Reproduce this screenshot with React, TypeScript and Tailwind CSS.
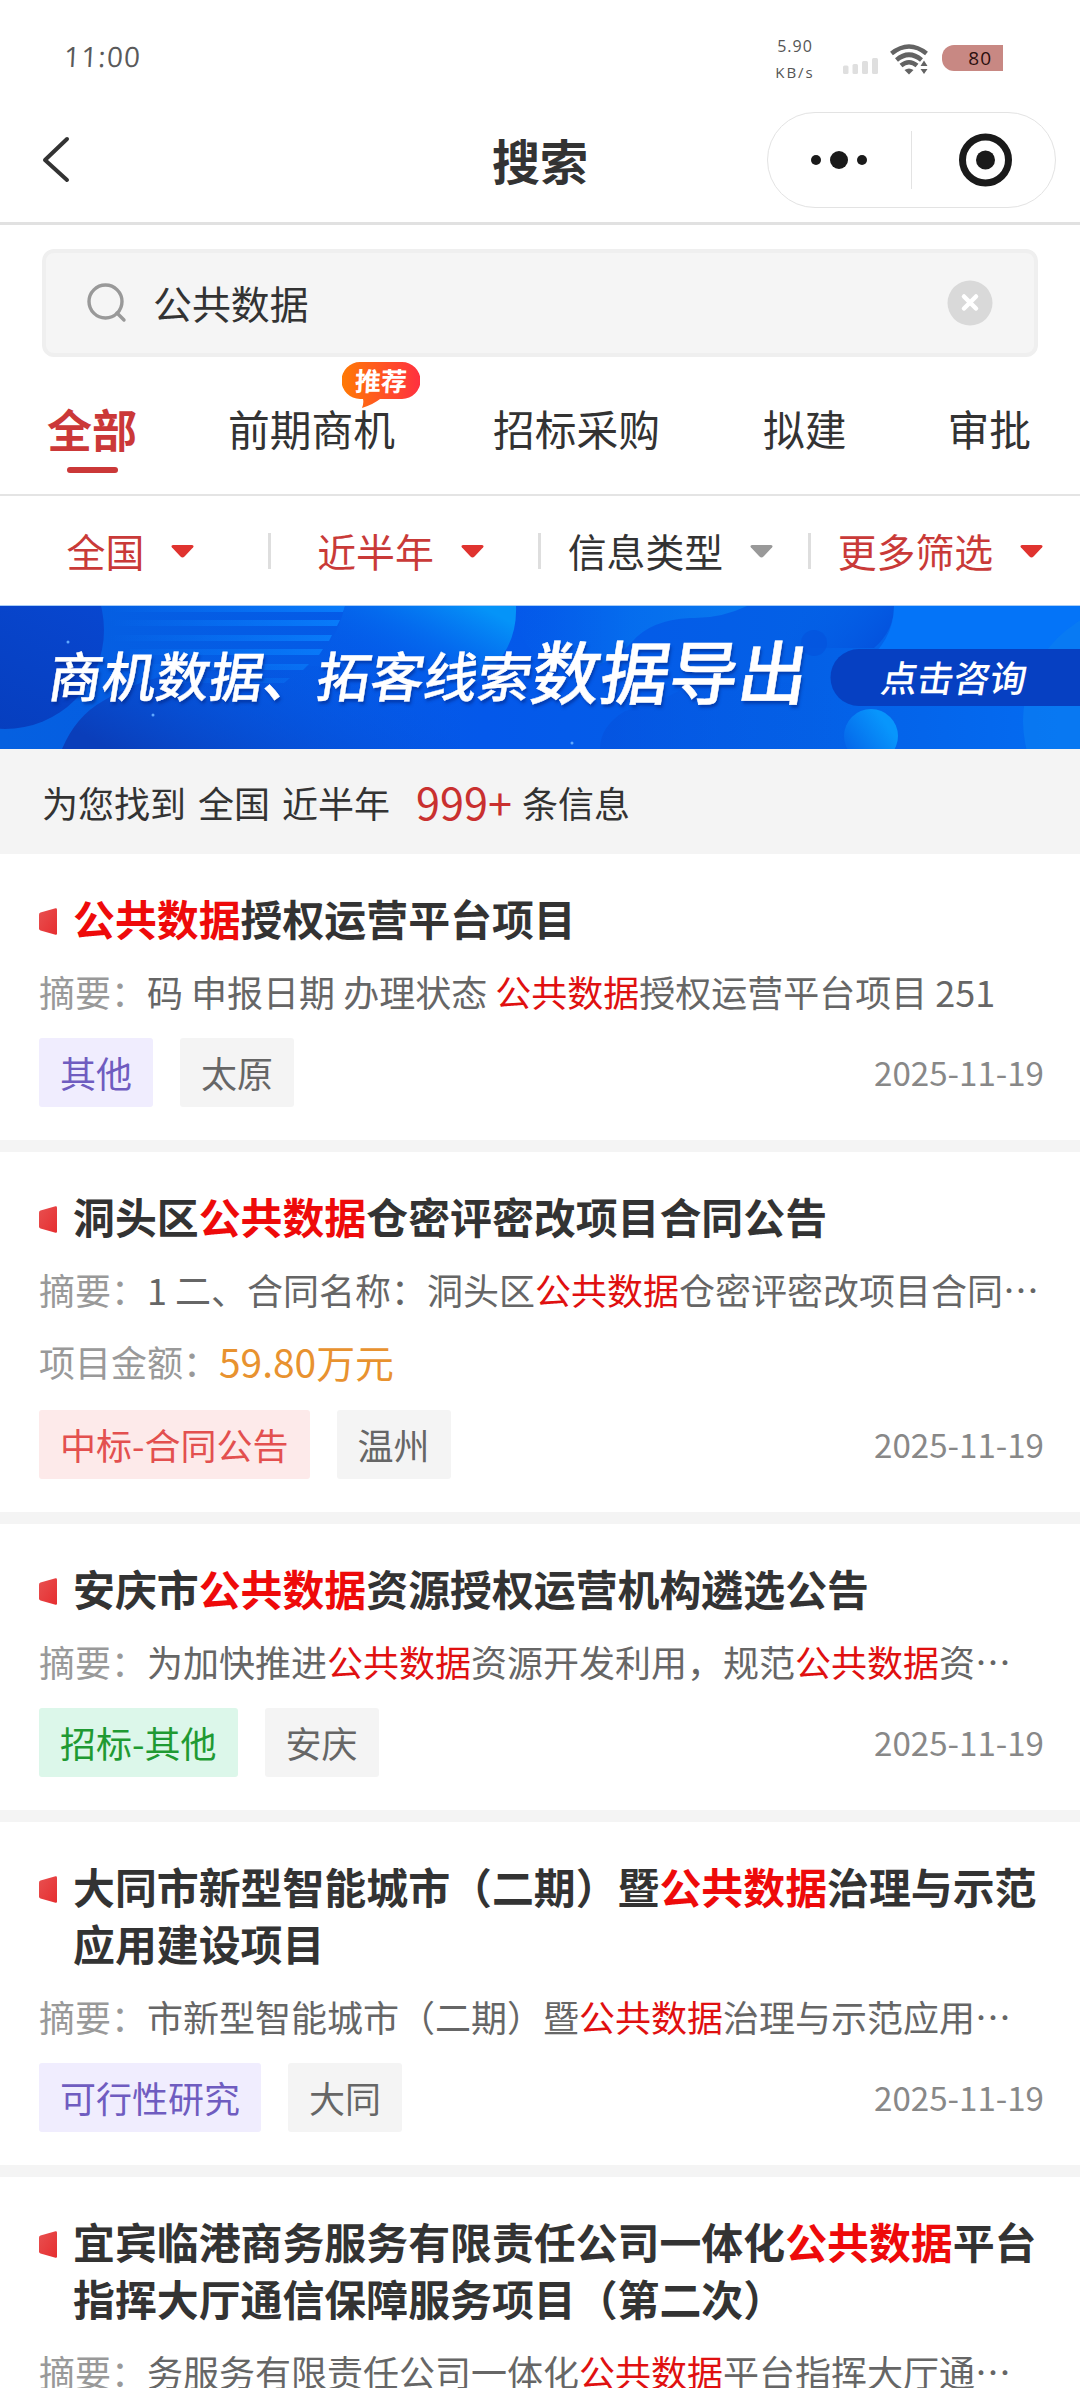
import React from "react";

type Part = string | { hl: string };

interface Item {
  title: Part[];
  summary: Part[];
  amount?: string;
  tag: string;
  tagClass: string;
  city: string;
}

const KEY = { hl: "公共数据" };
const PURPLE = "bg-[#f0edfe] text-[#6f5cc0]";
const RED = "bg-[#fdeaea] text-[#e3504f]";
const GREEN = "bg-[#dcf7ea] text-[#1f9a32]";

const ITEMS: Item[] = [
  {
    title: [KEY, "授权运营平台项目"],
    summary: ["码 申报日期 办理状态 ", KEY, "授权运营平台项目 251"],
    tag: "其他",
    tagClass: PURPLE,
    city: "太原",
  },
  {
    title: ["洞头区", KEY, "仓密评密改项目合同公告"],
    summary: ["1 二、合同名称：洞头区", KEY, "仓密评密改项目合同…"],
    amount: "59.80万元",
    tag: "中标-合同公告",
    tagClass: RED,
    city: "温州",
  },
  {
    title: ["安庆市", KEY, "资源授权运营机构遴选公告"],
    summary: ["为加快推进", KEY, "资源开发利用，规范", KEY, "资…"],
    tag: "招标-其他",
    tagClass: GREEN,
    city: "安庆",
  },
  {
    title: ["大同市新型智能城市（二期）暨", KEY, "治理与示范应用建设项目"],
    summary: ["市新型智能城市（二期）暨", KEY, "治理与示范应用…"],
    tag: "可行性研究",
    tagClass: PURPLE,
    city: "大同",
  },
  {
    title: ["宜宾临港商务服务有限责任公司一体化", KEY, "平台指挥大厅通信保障服务项目（第二次）"],
    summary: ["务服务有限责任公司一体化", KEY, "平台指挥大厅通…"],
    tag: "招标-其他",
    tagClass: GREEN,
    city: "宜宾",
  },
];

function Parts({ parts, color }: { parts: Part[]; color: string }) {
  return (
    <>
      {parts.map((p, i) =>
        typeof p === "string" ? (
          <span key={i}>{p}</span>
        ) : (
          <span key={i} className={color}>
            {p.hl}
          </span>
        )
      )}
    </>
  );
}

function StatusBar() {
  return (
    <div className="flex h-[112px] items-start justify-between pl-[64px] pr-[77px]">
      <div className="mt-[40px] -skew-x-3 font-['Open_Sans'] text-[28px] leading-8 font-medium tracking-[1.2px] text-[#5a5a5a]">
        11:00
      </div>
      <div className="flex">
        <div className="mt-[36px] flex w-[40px] flex-col items-center font-['Open_Sans'] text-[16px] leading-5 text-[#555]">
          <span className="tracking-[1px]">5.90</span>
          <span className="mt-[6px] text-[15px] tracking-[2px]">KB/s</span>
        </div>
        <svg className="mt-[58px] ml-[28px]" width="36" height="16" viewBox="0 0 36 16" fill="#dfdfdf">
          <rect x="0" y="7.5" width="5.5" height="8.5" rx="1.5" />
          <rect x="9.5" y="6" width="5.5" height="10" rx="1.5" />
          <rect x="19" y="3" width="6" height="13" rx="1.5" />
          <rect x="29" y="0" width="6" height="16" rx="1.5" />
        </svg>
        <svg className="mt-[44px] ml-[11px]" width="40" height="31" viewBox="0 0 40 31">
          <g fill="none" stroke="#636363" strokeWidth="4.6">
            <path d="M1.5 9.500 Q19 -4.500 36.500 9.500" />
            <path d="M6.5 16 Q19 5.500 31.500 16" />
            <path d="M11 21.500 Q19 15 27 21.500" />
          </g>
          <path d="M14.500 26 Q19 23 23.500 26 L19 30.500 Z" fill="#636363" />
          <path d="M34 16.500 L37.500 22 H30.500 Z M34 30 L37.500 25 H30.500 Z" fill="#636363" />
        </svg>
        <div className="mt-[45px] ml-[12px] flex h-[26px] w-[61px] items-center justify-end rounded-l-[12px] bg-[#c88883] pr-[11px] font-['Open_Sans'] text-[19px] tracking-[1px] text-[#2b0f0e]">
          80
        </div>
      </div>
    </div>
  );
}

function NavBar() {
  return (
    <div className="flex h-[113px] items-start justify-between border-b-[3px] border-[#e1e1e1] pl-[42px] pr-[24px]">
      <div className="flex h-24 w-[271px] items-center">
        <svg width="28" height="48" viewBox="0 0 28 48" fill="none" stroke="#333" strokeWidth="4" strokeLinecap="round" strokeLinejoin="round">
          <path d="M25 3 L3 24 L25 44" />
        </svg>
      </div>
      <h1 className="text-[48px] leading-[94px] font-bold text-[#333]">搜索</h1>
      <div className="flex h-24 w-[289px] items-center rounded-full border border-[#e3e3e3]">
        <svg width="143" height="58" viewBox="0 0 143 58" fill="#1a1a1a">
          <circle cx="48" cy="29" r="5" />
          <circle cx="71" cy="29" r="9" />
          <circle cx="94" cy="29" r="5" />
        </svg>
        <div className="h-[58px] w-px bg-[#e3e3e3]" />
        <svg width="143" height="58" viewBox="0 0 143 58">
          <circle cx="73.500" cy="29" r="23" fill="none" stroke="#1a1a1a" strokeWidth="7" />
          <circle cx="73.500" cy="29" r="9.500" fill="#1a1a1a" />
        </svg>
      </div>
    </div>
  );
}

function SearchBox() {
  return (
    <div className="mx-[42px] mt-[24px] flex h-[108px] items-center rounded-[12px] border-4 border-[#efefef] bg-[#f5f5f5] pl-[40px] pr-[41px] text-[#333]">
      <svg width="42" height="42" viewBox="0 0 42 42" fill="none" stroke="#999" strokeWidth="3.400" strokeLinecap="round">
        <circle cx="19.500" cy="19.500" r="16.500" />
        <path d="M31 31 L38 38" />
      </svg>
      <span className="mb-[2px] ml-[25px] text-[38.88px] leading-none">公共数据</span>
      <svg className="ml-auto" width="46" height="46" viewBox="0 0 46 46">
        <circle cx="23" cy="23" r="22.500" fill="#d9d9d9" />
        <path d="M17 16.500 L29 28.500 M29 16.500 L17 28.500" stroke="#fff" strokeWidth="4.500" strokeLinecap="round" />
      </svg>
    </div>
  );
}

function Tabs() {
  return (
    <div className="flex h-[139px] items-start border-b-2 border-[#e4e4e4] pl-[46px] text-[41.760px] leading-[60px] whitespace-nowrap text-[#333]">
      <div className="mt-[42px] flex w-[92px] flex-col items-center">
        <span className="text-[45px] font-bold text-[#cb3838]">全部</span>
        <span className="mt-[8px] h-[6px] w-[51px] rounded-full bg-[#cb3838]" />
      </div>
      <div className="relative mt-[41px] ml-[90px]">
        前期商机
        <div className="absolute top-[-36px] left-[114px] h-[46px] w-[78px]">
          <svg className="absolute inset-0" width="78" height="46" viewBox="0 0 78 46">
            <defs>
              <linearGradient id="badge" x1="0" x2="1">
                <stop offset="0" stopColor="#ff7a05" />
                <stop offset="1" stopColor="#ff3040" />
              </linearGradient>
            </defs>
            <path d="M18 0 H60 A18 18 0 0 1 60 37 H38 Q32 42 20 46 Q22 41 21 37 H18 A18 18 0 0 1 18 0 Z" fill="url(#badge)" />
          </svg>
          <span className="absolute top-0 left-[13px] -skew-x-3 text-[26px] leading-[36px] font-bold text-white">推荐</span>
        </div>
      </div>
      <span className="mt-[41px] ml-[98px]">招标采购</span>
      <span className="mt-[41px] ml-[103px]">拟建</span>
      <span className="mt-[41px] ml-[101px]">审批</span>
    </div>
  );
}

const FILTERS = [
  { label: "全国", active: true },
  { label: "近半年", active: true },
  { label: "信息类型", active: false },
  { label: "更多筛选", active: true },
];

function Filters() {
  return (
    <div className="grid h-[109px] grid-cols-4 text-[38.88px]">
      {FILTERS.map((f, i) => (
        <div key={f.label} className="relative flex items-center justify-center pr-[9px] whitespace-nowrap">
          <span className={f.active ? "text-[#c93a38]" : "text-[#333]"}>{f.label}</span>
          <svg className="mt-[2px] ml-[27px]" width="23" height="13" viewBox="0 0 23 13">
            <path
              d="M2 0 H21 Q23.500 0.500 22 2.500 L13.500 11.500 Q11.500 13.500 9.500 11.500 L1 2.500 Q-0.500 0.500 2 0 Z"
              fill={f.active ? "#e0332f" : "#999"}
            />
          </svg>
          {i < 3 && <span className="absolute top-[37px] right-[-1px] h-[36px] w-[3px] bg-[#dedede]" />}
        </div>
      ))}
    </div>
  );
}

function BannerArt() {
  return (
    <svg className="absolute inset-0" width="1080" height="143" viewBox="0 0 1080 143">
      <defs>
        <linearGradient id="base" x1="0" x2="1">
          <stop offset="0" stopColor="#0560e0" />
          <stop offset="0.45" stopColor="#0458ea" />
          <stop offset="0.75" stopColor="#0460e6" />
          <stop offset="1" stopColor="#046cf2" />
        </linearGradient>
        <linearGradient id="deep" x1="0" x2="1" y1="0.7" y2="0.3">
          <stop offset="0" stopColor="#0a3eba" />
          <stop offset="1" stopColor="#0458ea" stopOpacity="0" />
        </linearGradient>
        <linearGradient id="orb" x1="0" y1="1" x2="0.5" y2="0">
          <stop offset="0" stopColor="#063cba" />
          <stop offset="1" stopColor="#0848d2" />
        </linearGradient>
        <linearGradient id="stripe" gradientUnits="userSpaceOnUse" x1="110" x2="345" y1="0" y2="0">
          <stop offset="0" stopColor="#0a84ff" stopOpacity="0" />
          <stop offset="1" stopColor="#0a84ff" stopOpacity="0.8" />
        </linearGradient>
        <linearGradient id="glow" x1="1" y1="0.2" x2="0.3" y2="0.8">
          <stop offset="0" stopColor="#0594f8" />
          <stop offset="0.45" stopColor="#0470f0" stopOpacity="0.75" />
          <stop offset="1" stopColor="#0458ea" stopOpacity="0" />
        </linearGradient>
        <linearGradient id="wave" x1="0" x2="1">
          <stop offset="0" stopColor="#0568ee" stopOpacity="0" />
          <stop offset="0.5" stopColor="#0674f0" />
          <stop offset="1" stopColor="#0a84f2" />
        </linearGradient>
        <linearGradient id="dark" x1="1" y1="0.8" x2="0.2" y2="0.6">
          <stop offset="0" stopColor="#0450dc" />
          <stop offset="1" stopColor="#0460e6" stopOpacity="0" />
        </linearGradient>
        <linearGradient id="bubble" x1="0.8" y1="0.3" x2="0.1" y2="0.8">
          <stop offset="0" stopColor="#0896fc" />
          <stop offset="1" stopColor="#0568ea" />
        </linearGradient>
        <linearGradient id="soft" x1="0" x2="1">
          <stop offset="0" stopColor="#0550dc" />
          <stop offset="1" stopColor="#0460e6" stopOpacity="0" />
        </linearGradient>
      </defs>
      <rect width="1080" height="143" fill="url(#base)" />
      <circle cx="5" cy="24" r="99" fill="url(#orb)" />
      <path d="M62 143 Q76 110 103 95 Q150 65 230 60 L460 60 V143 Z" fill="url(#deep)" />
      <g fill="url(#stripe)">
        <path d="M110 0 H345 L343 6 H110 Z" />
        <path d="M110 14 H340 L337 20 H110 Z" />
        <path d="M110 29 H332 L329 35 H110 Z" />
        <path d="M130 43 H323 L319 49 H130 Z" />
        <path d="M150 58 H309 L303 64 H150 Z" opacity="0.8" />
        <path d="M170 72 H290 L284 77 H170 Z" opacity="0.5" />
      </g>
      <path d="M345 0 H516 Q518 50 470 80 Q430 100 370 90 Q320 80 309 60 Q335 40 345 0 Z" fill="url(#glow)" />
      <path d="M516 0 H747 Q720 13 690 12 Q650 14 632 36 Q600 70 560 60 Q517 50 516 0 Z" fill="url(#wave)" opacity="0.7" />
      <path d="M747 0 H894 Q894 25 874 42 H800 Q770 20 747 0 Z" fill="url(#dark)" />
      <circle cx="814" cy="37" r="13" fill="#0552dc" opacity="0.6" />
      <path d="M894 0 H1080 V60 H860 Q894 36 894 0 Z" fill="#0474f8" />
      <path d="M600 143 Q600 120 625 105 Q690 90 700 60 L860 90 V143 Z" fill="url(#soft)" opacity="0.6" />
      <circle cx="1140" cy="115" r="117" fill="#0a7cf2" opacity="0.75" />
      <path d="M859 43 H1080 V100 H859 A28.500 28.500 0 0 1 859 43 Z" fill="#0640c2" />
      <circle cx="871" cy="130" r="27" fill="url(#bubble)" />
      <circle cx="68" cy="36" r="1.500" fill="#5fa8ff" />
      <circle cx="153" cy="109" r="1.500" fill="#5fa8ff" />
      <circle cx="572" cy="137" r="1.500" fill="#5fa8ff" />
    </svg>
  );
}

function Banner() {
  return (
    <div className="relative h-[144px] overflow-hidden border-t border-[#a9cdf6]">
      <BannerArt />
      <div className="relative flex h-full items-start whitespace-nowrap text-white">
        <span className="mt-[28px] ml-[50px] -skew-x-9 text-[53.600px] leading-[80px] font-medium [-webkit-text-stroke:0.4px_white] [text-shadow:2px_3px_3px_rgba(0,30,120,0.5)]">
          商机数据、拓客线索
        </span>
        <span className="mt-[23px] ml-[1px] -skew-x-9 text-[69px] leading-[80px] font-medium [-webkit-text-stroke:0.5px_white] [text-shadow:2px_3px_3px_rgba(0,30,120,0.5)]">
          数据导出
        </span>
        <span className="mt-[49px] ml-[73px] -skew-x-9 text-[36.300px] leading-[42px] font-medium">点击咨询</span>
      </div>
    </div>
  );
}

function Card({ item }: { item: Item }) {
  return (
    <article className="mb-[12px] bg-white pt-[35px] pr-[36px] pb-[33px] pl-[39px]">
      <div className="flex">
        <svg className="mt-[19px] w-[18px] shrink-0" height="27" viewBox="0 0 18 27">
          <defs>
            <linearGradient id="mark" x1="0" x2="1" y1="0" y2="1">
              <stop offset="0" stopColor="#e85050" />
              <stop offset="1" stopColor="#e62e30" />
            </linearGradient>
          </defs>
          <path d="M1.500 4.500 L16.500 0.200 Q18 0 18 1.500 V25.500 Q18 27 16.500 26.700 L1.500 22.500 Q0 22 0 20.500 V6.500 Q0 5 1.500 4.500 Z" fill="url(#mark)" />
        </svg>
        <h2 className="ml-[16px] w-[971px] shrink-0 text-[41.900px] leading-[57px] font-bold text-[#333]">
          <Parts parts={item.title} color="text-[#ee0a0a]" />
        </h2>
      </div>
      <p className="mt-[18px] text-[36px] leading-[54px] whitespace-nowrap text-[#666]">
        <span className="text-[#999]">摘要：</span>
        <Parts parts={item.summary} color="text-[#e01010]" />
      </p>
      {item.amount && (
        <p className="mt-[18px] mb-[22px] flex h-[54px] items-center text-[36px]">
          <span className="text-[#999]">项目金额：</span>
          <span className="text-[38.88px] text-[#e8922f]">{item.amount}</span>
        </p>
      )}
      <div className="mt-[20px] flex h-[69px] items-center text-[36px] leading-[69px]">
        <span className={`rounded-[3px] px-[21px] ${item.tagClass}`}>{item.tag}</span>
        <span className="ml-[27px] rounded-[3px] bg-[#f4f4f4] px-[21px] text-[#666]">{item.city}</span>
        <span className="ml-auto text-[33.120px] text-[#888]">2025-11-19</span>
      </div>
    </article>
  );
}

export default function App() {
  return (
    <div
      lang="zh-CN"
      className="h-[2388px] w-[1080px] overflow-hidden bg-white font-['Noto_Sans_CJK_SC',sans-serif] text-[#333]"
    >
      <StatusBar />
      <NavBar />
      <SearchBox />
      <Tabs />
      <Filters />
      <Banner />
      <main className="bg-[#f4f4f4]">
        <div className="flex h-[105px] items-center pl-[42px] text-[36px] whitespace-nowrap">
          <span>为您找到</span>
          <span className="ml-[12px]">全国</span>
          <span className="ml-[12px]">近半年</span>
          <span className="ml-[26px] text-[43.200px] text-[#c9302f]">999+</span>
          <span className="ml-[10px]">条信息</span>
        </div>
        {ITEMS.map((item, i) => (
          <Card key={i} item={item} />
        ))}
      </main>
    </div>
  );
}
